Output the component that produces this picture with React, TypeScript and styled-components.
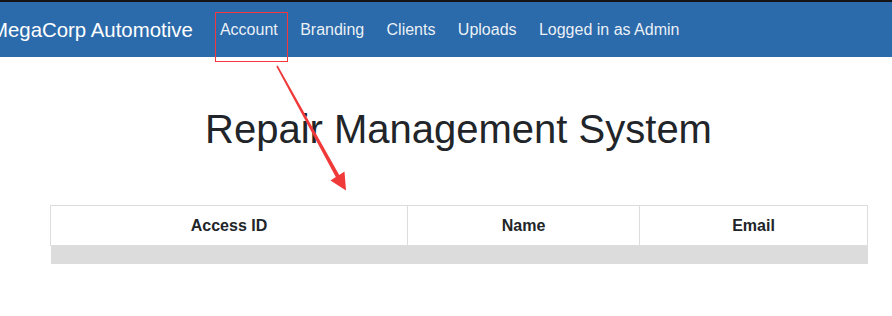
import styled, { createGlobalStyle } from 'styled-components';

const GlobalStyle = createGlobalStyle`
  html, body {
    margin: 0;
    padding: 0;
    background: #fff;
  }

  body {
    font-family: "Liberation Sans", Arial, Helvetica, sans-serif;
    color: #212529;
    overflow: hidden;
  }
`;

const Page = styled.div`
  position: relative;
  width: 892px;
  height: 316px;
  overflow: hidden;
`;

const Navbar = styled.nav`
  display: flex;
  align-items: center;
  height: 55px;
  border-top: 2px solid #141414;
  background-color: #2c6bab;
`;

const Brand = styled.a`
  margin-left: -9px;
  margin-right: 16px;
  font-size: 20.4px;
  line-height: 30px;
  color: #fff;
  white-space: nowrap;
`;

const NavList = styled.ul`
  display: flex;
  margin: 0;
  padding: 0;
  list-style: none;
`;

const NavLink = styled.a`
  display: block;
  padding: 0 11.2px;
  font-size: 16px;
  line-height: 24px;
  color: rgba(255, 255, 255, 0.92);
  white-space: nowrap;
`;

const Container = styled.main`
  width: 817px;
  margin-left: 50px;
`;

const Title = styled.h1`
  margin: 48px 0 52px;
  font-size: 40px;
  font-weight: 400;
  line-height: 48px;
  text-align: center;
  color: #212529;
`;

const Table = styled.table`
  width: 817px;
  border-collapse: collapse;
  table-layout: fixed;
`;

const HeadCell = styled.th`
  height: 39px;
  padding: 0 12px;
  border: 1px solid #dddddd;
  font-size: 16px;
  font-weight: 700;
  text-align: center;
  color: #212529;
`;

const EmptyCell = styled.td`
  height: 18px;
  padding: 0;
  background-color: #dcdcdc;
`;

const Highlight = styled.div`
  position: absolute;
  left: 215px;
  top: 12px;
  width: 71px;
  height: 48px;
  border: 1px solid #f5363a;
  pointer-events: none;
`;

const ArrowLayer = styled.svg`
  position: absolute;
  left: 0;
  top: 0;
  pointer-events: none;
`;

const links = ['Account', 'Branding', 'Clients', 'Uploads', 'Logged in as Admin'];

export default function App() {
  return (
    <Page>
      <GlobalStyle />
      <Navbar>
        <Brand>MegaCorp Automotive</Brand>
        <NavList>
          {links.map((l) => (
            <li key={l}>
              <NavLink>{l}</NavLink>
            </li>
          ))}
        </NavList>
      </Navbar>
      <Container>
        <Title>Repair Management System</Title>
        <Table>
          <colgroup>
            <col style={{ width: 357 }} />
            <col style={{ width: 232 }} />
            <col style={{ width: 228 }} />
          </colgroup>
          <thead>
            <tr>
              <HeadCell>Access ID</HeadCell>
              <HeadCell>Name</HeadCell>
              <HeadCell>Email</HeadCell>
            </tr>
          </thead>
          <tbody>
            <tr>
              <EmptyCell colSpan={3} />
            </tr>
          </tbody>
        </Table>
      </Container>
      <Highlight />
      <ArrowLayer width="892" height="316" viewBox="0 0 892 316">
        <polygon
          points="276.3,66.4 277.7,65.6 339.2,175 344.5,171.5 346,190.5 330.5,180.5 335.8,177"
          fill="#f03a3a"
        />
      </ArrowLayer>
    </Page>
  );
}
